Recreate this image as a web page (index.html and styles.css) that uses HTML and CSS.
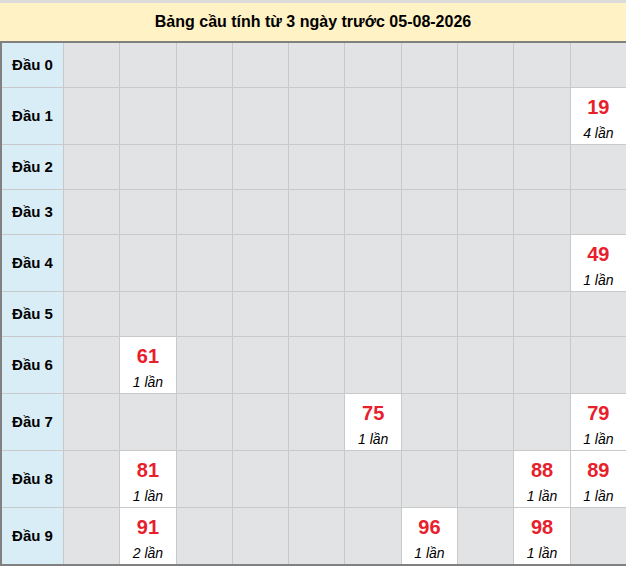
FILE: index.html
```html
<!DOCTYPE html>
<html lang="vi">
<head>
<meta charset="utf-8">
<title>Bảng cầu</title>
<link rel="stylesheet" href="styles.css">
</head>
<body>
<div class="board">
  <div class="title">Bảng cầu tính từ 3 ngày trước 05-08-2026</div>
  <div class="grid">
    <div class="label">Đầu 0</div>
    <div class="c"></div><div class="c"></div><div class="c"></div><div class="c"></div><div class="c"></div><div class="c"></div><div class="c"></div><div class="c"></div><div class="c"></div><div class="c"></div>

    <div class="label">Đầu 1</div>
    <div class="c"></div><div class="c"></div><div class="c"></div><div class="c"></div><div class="c"></div><div class="c"></div><div class="c"></div><div class="c"></div><div class="c"></div>
    <div class="c hit"><span class="num">19</span><span class="cnt">4 lần</span></div>

    <div class="label">Đầu 2</div>
    <div class="c"></div><div class="c"></div><div class="c"></div><div class="c"></div><div class="c"></div><div class="c"></div><div class="c"></div><div class="c"></div><div class="c"></div><div class="c"></div>

    <div class="label">Đầu 3</div>
    <div class="c"></div><div class="c"></div><div class="c"></div><div class="c"></div><div class="c"></div><div class="c"></div><div class="c"></div><div class="c"></div><div class="c"></div><div class="c"></div>

    <div class="label">Đầu 4</div>
    <div class="c"></div><div class="c"></div><div class="c"></div><div class="c"></div><div class="c"></div><div class="c"></div><div class="c"></div><div class="c"></div><div class="c"></div>
    <div class="c hit"><span class="num">49</span><span class="cnt">1 lần</span></div>

    <div class="label">Đầu 5</div>
    <div class="c"></div><div class="c"></div><div class="c"></div><div class="c"></div><div class="c"></div><div class="c"></div><div class="c"></div><div class="c"></div><div class="c"></div><div class="c"></div>

    <div class="label">Đầu 6</div>
    <div class="c"></div>
    <div class="c hit"><span class="num">61</span><span class="cnt">1 lần</span></div>
    <div class="c"></div><div class="c"></div><div class="c"></div><div class="c"></div><div class="c"></div><div class="c"></div><div class="c"></div><div class="c"></div>

    <div class="label">Đầu 7</div>
    <div class="c"></div><div class="c"></div><div class="c"></div><div class="c"></div><div class="c"></div>
    <div class="c hit"><span class="num">75</span><span class="cnt">1 lần</span></div>
    <div class="c"></div><div class="c"></div><div class="c"></div>
    <div class="c hit"><span class="num">79</span><span class="cnt">1 lần</span></div>

    <div class="label">Đầu 8</div>
    <div class="c"></div>
    <div class="c hit"><span class="num">81</span><span class="cnt">1 lần</span></div>
    <div class="c"></div><div class="c"></div><div class="c"></div><div class="c"></div><div class="c"></div><div class="c"></div>
    <div class="c hit"><span class="num">88</span><span class="cnt">1 lần</span></div>
    <div class="c hit"><span class="num">89</span><span class="cnt">1 lần</span></div>

    <div class="label">Đầu 9</div>
    <div class="c"></div>
    <div class="c hit"><span class="num">91</span><span class="cnt">2 lần</span></div>
    <div class="c"></div><div class="c"></div><div class="c"></div><div class="c"></div>
    <div class="c hit"><span class="num">96</span><span class="cnt">1 lần</span></div>
    <div class="c"></div>
    <div class="c hit"><span class="num">98</span><span class="cnt">1 lần</span></div>
    <div class="c"></div>
  </div>
</div>
</body>
</html>
```

FILE: styles.css
```css
html, body {
  margin: 0;
  padding: 0;
  overflow: hidden;
}

body {
  background: #dcdcdc;
  padding-top: 3px;
  font-family: "Liberation Sans", Arial, sans-serif;
  color: #000;
}

.board {
  width: 626px;
}

.title {
  height: 38px;
  line-height: 38px;
  background: #fff2c4;
  text-align: center;
  font-weight: bold;
  font-size: 16px;
}

.grid {
  display: grid;
  grid-template-columns: 61px repeat(10, 1fr);
  gap: 1px;
  background: #c9c9c9;
  border-top: 2px solid #808080;
  border-bottom: 2px solid #808080;
  border-left: 2px solid #808080;
}

.label {
  background: #d9edf7;
  display: flex;
  align-items: center;
  justify-content: center;
  font-weight: bold;
  font-size: 15px;
  min-height: 44px;
  padding-bottom: 2px;
  box-sizing: border-box;
}

.c {
  background: #e2e3e5;
  min-height: 44px;
}

.c.hit {
  background: #fff;
  display: flex;
  flex-direction: column;
  align-items: center;
  padding-top: 8px;
  height: 48px;
}

.num {
  color: #e8202c;
  font-weight: bold;
  font-size: 20px;
  line-height: 22px;
}

.cnt {
  font-style: italic;
  font-size: 14px;
  line-height: 22px;
  margin-top: 4px;
}
```
